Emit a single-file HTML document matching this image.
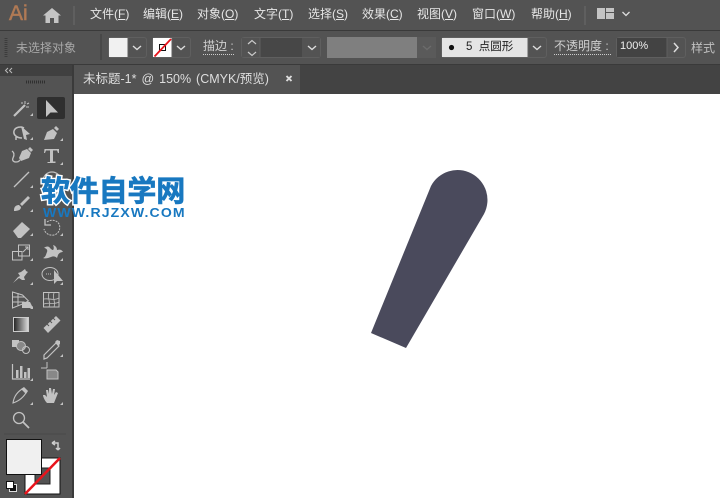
<!DOCTYPE html>
<html><head><meta charset="utf-8"><style>
html,body{margin:0;padding:0;width:720px;height:498px;overflow:hidden;background:#535353}
body{position:relative;font-family:"Liberation Sans","Noto Sans CJK SC",sans-serif}
.a{position:absolute;white-space:nowrap}
.m{top:5px;font-size:12px;line-height:18px;color:#e6e6e6}
.t{font-size:11.5px;line-height:16px;color:#cfcfcf}
.box{position:absolute;box-sizing:border-box;border:1px solid #5f5f5f;border-radius:3px}
.wm{font-weight:bold;color:#1878c0}
svg{position:absolute;left:0;top:0}
</style></head><body>
<div class="a" style="left:0;top:0;width:720px;height:30px;background:#535353"></div>
<div class="a" style="left:0;top:30px;width:720px;height:1px;background:#3a3a3a"></div>
<div class="a" style="left:0;top:31px;width:720px;height:33px;background:#535353"></div>
<div class="a" style="left:0;top:64px;width:720px;height:30px;background:#434343;border-top:1px solid #3a3a3a;box-sizing:border-box"></div>
<div class="a" style="left:73px;top:65px;width:227px;height:29px;background:#535353"></div>
<div class="a" style="left:0;top:64px;width:72px;height:434px;background:#535353;border-top:1px solid #3a3a3a;box-sizing:border-box"></div>
<div class="a" style="left:0;top:65px;width:72px;height:11px;background:#404040"></div>
<div class="a" style="left:72px;top:64px;width:2px;height:434px;background:#3a3a3a"></div>
<div class="a" style="left:74px;top:94px;width:646px;height:404px;background:#fff"></div>

<div class="a" style="left:9px;top:0;font-size:21px;line-height:28px;color:#b07a55;-webkit-text-stroke:.5px #b07a55">Ai</div>
<div class="a m" style="left:90px">文件(<u>F</u>)</div>
<div class="a m" style="left:143px">编辑(<u>E</u>)</div>
<div class="a m" style="left:197px">对象(<u>O</u>)</div>
<div class="a m" style="left:254px">文字(<u>T</u>)</div>
<div class="a m" style="left:308px">选择(<u>S</u>)</div>
<div class="a m" style="left:362px">效果(<u>C</u>)</div>
<div class="a m" style="left:417px">视图(<u>V</u>)</div>
<div class="a m" style="left:472px">窗口(<u>W</u>)</div>
<div class="a m" style="left:531px">帮助(<u>H</u>)</div>

<div class="a" style="left:16px;top:39px;font-size:12px;line-height:18px;color:#a8a8a8">未选择对象</div>
<div class="box" style="left:108px;top:37px;width:39px;height:21px"></div>
<div class="a" style="left:109px;top:38px;width:19px;height:19px;background:#f1f1f1"></div>
<div class="box" style="left:152px;top:37px;width:39px;height:21px"></div>
<div class="a" style="left:153px;top:38px;width:19px;height:19px;background:#fff"></div>
<div class="a t" style="left:203px;top:40px;border-bottom:1px dotted #ccc;line-height:13px;padding-bottom:1px;width:31px;font-size:12px">描边 :</div>
<div class="box" style="left:241px;top:37px;width:80px;height:21px;background:#474747"></div>
<div class="a" style="left:242px;top:38px;width:18px;height:19px;background:#535353"></div>
<div class="a" style="left:304px;top:38px;width:16px;height:19px;background:#535353"></div>
<div class="a" style="left:327px;top:37px;width:90px;height:21px;background:#7f7f7f"></div>
<div class="a" style="left:417px;top:37px;width:19px;height:21px;background:#5a5a5a"></div>
<div class="box" style="left:441px;top:37px;width:106px;height:21px;background:#535353"></div>
<div class="a" style="left:442px;top:38px;width:86px;height:19px;background:#e4e4e4"></div>
<div class="a" style="left:466px;top:39px;font-size:11.5px;line-height:17px;color:#222">5&nbsp; 点圆形</div>
<div class="a t" style="left:554px;top:40px;font-size:12px;line-height:13px;border-bottom:1px dotted #ccc;padding-bottom:1px;width:57px">不透明度 :</div>
<div class="box" style="left:616px;top:37px;width:70px;height:21px;background:#535353"></div>
<div class="a" style="left:617px;top:38px;width:50px;height:19px;background:#434343"></div>
<div class="a" style="left:620px;top:38px;font-size:11px;line-height:17px;color:#eee">100%</div>
<div class="a t" style="left:691px;top:39px;font-size:12px;line-height:18px;color:#c0c0c0">样式</div>

<div class="a" style="left:83px;top:71px;font-size:12.5px;line-height:17px;color:#dedede;word-spacing:1.5px">未标题-1* @ 150% (CMYK/预览)</div>

<svg width="720" height="498" viewBox="0 0 720 498" fill="none">
<!-- top bar icons -->
<path d="M43 15.500 52 8l9 7.500h-2.500V23h-4.500v-5h-4v5h-4.500v-7.500z" fill="#c4c4c4"/>
<path d="M74 6v19M585 6v19" stroke="#5f5f5f" stroke-width="2"/>
<path d="M597 8h8v11h-8zM606 8h8v4h-8zM606 13h8v6h-8z" fill="#c4c4c4"/>
<path d="M622.500 12l3.500 3.500 3.500-3.500" stroke="#ddd" stroke-width="1.300"/>
<!-- gripper -->
<path d="M6 38v19" stroke="#3c3c3c" stroke-width="3" stroke-dasharray="1 1"/>
<path d="M101 34v26" stroke="#444" stroke-width="1.500"/>
<!-- control chevrons -->
<path d="M133 46l4 3.500 4-3.500M177 46l4 3.500 4-3.500M308 46l4 3.500 4-3.500M533 46l4 3.500 4-3.500" stroke="#ddd" stroke-width="1.400"/>
<path d="M423 46l4 3.500 4-3.500" stroke="#6c6c6c" stroke-width="1.400"/>
<path d="M248 44l4-3.500 4 3.500M248 52l4 3.500 4-3.500" stroke="#ccc" stroke-width="1.200"/>
<path d="M674 43l4 4.500-4 4.500" stroke="#ddd" stroke-width="1.500"/>
<path d="M128 37v21M172 37v21M260 37v21M303 37v21M528 37v21M667 37v21" stroke="#5f5f5f"/>
<!-- stroke swatch -->
<rect x="159.500" y="44.500" width="6" height="6" stroke="#111"/>
<path d="M154.500 56.500 171 39" stroke="#e8141c" stroke-width="1.800"/>
<circle cx="451.500" cy="47.500" r="2.600" fill="#111"/>
<!-- tab close -->
<path d="M286.500 76l5 5m0-5-5 5" stroke="#ddd" stroke-width="1.900"/>
<path d="M8 68 5.500 70.500 8 73M12 68 9.500 70.500 12 73" stroke="#bbb"/>
<path d="M26 82h20" stroke="#303030" stroke-width="3" stroke-dasharray="1 1"/>
<!-- shape -->
<path d="M371 333 431 186A29 29 0 0 1 484 214L406 348Z" fill="#4a4a5c"/>

<!-- selected tool -->
<rect x="37" y="97" width="28" height="22" rx="2" fill="#2f2f2f"/>
<g fill="#c2c2c2" stroke="#c2c2c2">
<path d="M46 100v17l4.500-4.500H58z" stroke="none"/>
<!-- wand -->
<path d="M14 116 25 105" stroke-width="2.200" fill="none"/>
<path d="M25 101v3M29 107h-3M21 103h2M29 103l-2 1" stroke-width="1" fill="none"/>
<!-- lasso -->
<path d="M22 126l9 8-4 1 1 5-3-1z" stroke="none" transform="translate(-1 0)"/>
<path d="M22 138c-5 0-9-3-8-7 1-4 7-5 10-3M16 137l0 3" fill="none" stroke-width="1.500"/>
<!-- pen -->
<path d="M44 140l3-8 6-3 4 4-3 6z" stroke="none"/>
<path d="M54 128l2-2 3 3-2 2z" stroke="none"/>
<!-- curvature -->
<path d="M19 158l3-7 5-2 4 4-2 5-8 3z" stroke="none"/>
<path d="M28 149l2-2 3 3-2 2z" stroke="none"/>
<path d="M12 151c3 2 2 5 1 7s0 4 3 4 3-1 4-2" fill="none" stroke-width="1.300"/>
<!-- type -->
<path d="M44.500 149h14.500v4h-1l-1-2.500h-4v11h2.500v1.500h-8V162h2.500v-11.500h-4l-1 2.500h-1z" stroke="none"/>
<!-- line -->
<path d="M14 187 29 172" fill="none" stroke-width="1.300"/>
<!-- hidden ellipse tool -->
<circle cx="52" cy="181" r="9" fill="none" stroke-width="1.200"/>
<!-- brush -->
<path d="M14 210c0-4 3-5 5-5l2 2c0 3-3 4-7 4zM20 204l8-8 2 2-8 8z" stroke="none"/>
<!-- eraser -->
<path d="M13 231l9-9 8 7-9 9h-3z" stroke="none"/>
<!-- rotate -->
<path d="M47 222c4-3 10-2 12 2s0 10-5 11-9-2-10-6" fill="none" stroke-width="1" stroke-dasharray="2 1"/>
<path d="M45 219v6h6" fill="none" stroke-width="1.300"/>
<!-- scale -->
<path d="M12.500 251.500h9.500v8.500h-9.500zM18.500 245h11v11h-11z" fill="none" stroke-width="1"/>
<path d="M23 252l5-5M25 247h3v3" fill="none" stroke-width="1"/>
<!-- puppet/warp -->
<path d="M43 258c3-1 3-4 4-6 1-2-1-4-3-4 2-2 5-2 6 0 1 1 2 2 3 2 1-1 1-3 0-5 3 1 4 3 4 5 3-1 5 0 6 2-2 0-4 1-5 3l-1 3c-2-2-4-2-6-1-3 1-5 2-8 1z" stroke="none"/>
<!-- pin -->
<path d="M13 283l5-6 2-1-2-3 3-1 4-3 1 2 2 1-1 1-3 4 1 3-3 0-3-2-6 5z" stroke="none"/>
<!-- shape builder -->
<ellipse cx="50" cy="274" rx="8" ry="6.500" fill="none" stroke-width="1"/>
<path d="M46 274h6" stroke-dasharray="1 1" fill="none"/>
<path d="M54 270v14l3-3h6z" stroke="none"/>
<!-- perspective -->
<path d="M12.500 292l10 3 6 6-6 3-10 4zM12.500 297h12M12.500 302h12M18 293v13" fill="none" stroke-width="1"/>
<path d="M22 302h8l3 6H22z" stroke="none"/>
<!-- mesh -->
<path d="M43.500 292.500h15.500v14.500H43.500z" fill="none" stroke-width="1"/>
<path d="M44 299c5-1 10 2 15-1M44 304c5-2 10 1 15-2M49 293c-2 5 2 9 0 14M54 293c-2 5 2 9 0 14" fill="none" stroke-width=".8"/>
<!-- ruler -->
<path d="M43.500 328 56 316l4.500 4.500L48 333z" stroke="none"/>
<path d="M49 326l-2-2M52 323l-2-2M55 320l-2-2" stroke="#535353" stroke-width="1" fill="none"/>
<!-- blend -->
<path d="M12 340h7v7h-7z" stroke="none"/>
<circle cx="21" cy="346" r="4.500" fill="#888" stroke-width="1"/>
<circle cx="26" cy="350" r="3.500" fill="none" stroke-width="1"/>
<!-- eyedropper -->
<path d="M44 355 56 343l3 3-12 12-3 1z" fill="none" stroke-width="1.200"/>
<path d="M55 342l2-2 3 1 0 3-2 2z" stroke="none"/>
<!-- chart -->
<path d="M12.500 364v15h17.500" fill="none" stroke-width="1.200"/>
<path d="M16 370h2.500v8H16zM20 366h2.500v12H20zM24 372h2.500v6H24zM27.500 368H30v10h-2.500z" stroke="none"/>
<!-- artboard -->
<path d="M50 370h6l2 2v7H47v-9z" stroke-width="1" fill="#888"/>
<path d="M41 368h6M47 362v6" fill="none" stroke-width="1"/>
<!-- pencil/knife -->
<path d="M13 403c1-7 5-12 11-15l3 3c-3 6-8 10-14 12z" fill="none" stroke-width="1.100"/>
<path d="M21 389l3-2 4 4-2 3z" stroke="none"/>
<!-- hand -->
<path d="M47 403c-2-2-4-6-4-8l2 0 2 2-1-7h2l1 4 0-6h2l1 6 1-5h2l-1 6 2-3 2 1-2 5-2 5z" stroke="none"/>
<!-- zoom -->
<circle cx="19" cy="418" r="5.500" fill="none" stroke-width="1.300"/>
<path d="M23 422l6 6" fill="none" stroke-width="1.800"/>
<!-- corner triangles -->
<g stroke="none">
<path d="M33 116v-3l-3 3zM63 141v-3l-3 3zM33 140v-3l-3 3zM63 165v-3l-3 3zM33 188v-3l-3 3zM33 212v-3l-3 3zM33 236v-3l-3 3zM63 236v-3l-3 3zM33 261v-3l-3 3zM63 261v-3l-3 3zM33 285v-3l-3 3zM63 285v-3l-3 3zM33 309v-3l-3 3zM63 357v-3l-3 3zM33 381v-3l-3 3zM33 405v-3l-3 3zM63 405v-3l-3 3zM63 189v-3l-3 3z"/>
</g>
</g>
<!-- gradient icon -->
<defs><linearGradient id="g"><stop offset="0" stop-color="#222"/><stop offset="1" stop-color="#ddd"/></linearGradient></defs>
<rect x="13.500" y="317.500" width="15" height="14" fill="url(#g)" stroke="#ccc"/>
<!-- divider -->
<path d="M4 434h62" stroke="#484848"/>
<!-- fill/stroke -->
<rect x="25" y="458" width="35" height="36" fill="#fff" stroke="#111"/>
<rect x="35" y="468" width="15" height="16" fill="#535353" stroke="#222"/>
<path d="M25 494 60 458" stroke="#e8141c" stroke-width="2.500"/>
<rect x="6.500" y="439.500" width="35" height="35" fill="#f0f0f0" stroke="#111"/>
<path d="M52 443h6v7M52 443l3-2M52 443l3 2M58 450l-2-2M58 450l2-2" stroke="#ccc" stroke-width="1.500"/>
<rect x="9.500" y="484.500" width="7" height="7" fill="#111" stroke="#ddd"/>
<rect x="6.500" y="481.500" width="7" height="7" fill="#fff" stroke="#111"/>
</svg>

<div class="a wm" style="left:41px;top:175px;font-size:29px;line-height:34px;letter-spacing:-.2px;-webkit-text-stroke:3.500px #fff;">软件自学网</div>
<div class="a wm" style="left:41px;top:175px;font-size:29px;line-height:34px;letter-spacing:-.2px;-webkit-text-stroke:.7px #1878c0">软件自学网</div>
<div class="a wm" style="left:43px;top:206px;font-size:12.500px;line-height:14px;letter-spacing:1px;transform:scaleX(1.125);transform-origin:0 0">WWW.RJZXW.COM</div>
</body></html>
